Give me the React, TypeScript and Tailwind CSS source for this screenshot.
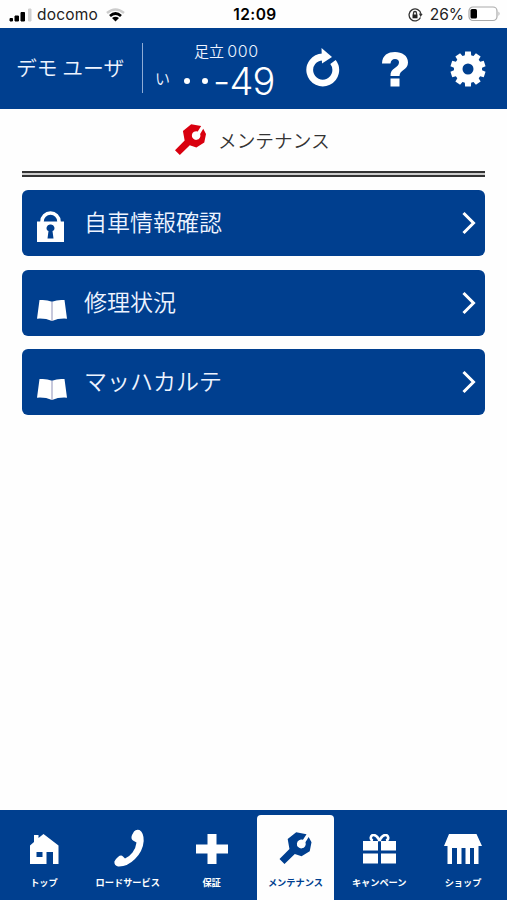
import type { ReactNode } from "react";

function Wrench({ className }: { className?: string }) {
  return (
    <svg viewBox="0 0 90 90" className={className} fill="currentColor">
      <path d="M0 76 28 48 23 20 47 1 76 6 66 22A12.500 12.500 0 1 0 73 29L82 14 90 29 85 54 62 68 43 62 14 90Z" />
    </svg>
  );
}

function Lock() {
  return (
    <svg viewBox="0 0 27 31" className="h-[31px] w-[27px]">
      <path d="M5 12V10.500a8.500 8.500 0 0 1 17 0V12" fill="none" stroke="#fff" strokeWidth="3.600" />
      <path d="M0 10.500h27V31H0z" fill="#fff" />
      <path d="M13.500 13.500a3.500 3.500 0 0 1 2 6.600L16.500 27.500h-6l1-7.400a3.500 3.500 0 0 1 2-6.600z" fill="#003f8f" />
    </svg>
  );
}

function Book() {
  return (
    <svg viewBox="0 0 30 21" className="h-[21px] w-[30px]">
      <path d="M2.500 0Q9-.3 15 1.800Q21-.3 27.500 0L30 18.700Q22 18 15 21Q8 18 0 18.700z" fill="#fff" />
      <path d="M15 1.800V21" stroke="#8f91b8" strokeWidth="1" />
    </svg>
  );
}

const menu = [
  { label: "自車情報確認", icon: <Lock />, pad: "pt-[21px]" },
  { label: "修理状況", icon: <Book />, pad: "pt-[30px]" },
  { label: "マッハカルテ", icon: <Book />, pad: "pt-[30px]" },
];

const tabs: { label: string; icon: ReactNode; active?: boolean }[] = [
  {
    label: "トップ",
    icon: (
      <svg viewBox="0 0 29 31" className="ml-[2px] h-[31px] w-[29px]" fill="currentColor">
        <path fillRule="evenodd" d="M4 1h4.500V4L13.500 0 28.500 11.500V30H23V18H16.500V30H0V11.500L4 8zM6.500 18v5H12.500V18z" />
      </svg>
    ),
  },
  {
    label: "ロードサービス",
    icon: (
      <svg viewBox="0 0 30 38" className="ml-[2px] h-[38px] w-[30px] -translate-y-px" fill="currentColor">
        <path d="M20 2.500Q22 0 25.500 1Q30 4 29.700 12Q29 22 21 30Q13 38 4 37.500Q0 36.500.4 32.500Q1 30.500 4 28Q7 25.500 9 27.500L11 29.500Q15 28 18.500 23.500Q22 18.500 22.500 13.500L19 11.500Q16.500 9.500 18 6z" />
      </svg>
    ),
  },
  {
    label: "保証",
    icon: (
      <svg viewBox="0 0 32 30" className="ml-px h-[30px] w-8" fill="currentColor">
        <path d="M11.500 0h9v10.500H32v9H20.500V30h-9V19.500H0v-9h11.500z" />
      </svg>
    ),
  },
  { label: "メンテナンス", icon: <Wrench className="h-8 w-[35px] -translate-y-px" />, active: true },
  {
    label: "キャンペーン",
    icon: (
      <svg viewBox="0 0 33 30" className="h-[30px] w-[33px]" fill="currentColor">
        <path d="M0 7h15v9.500H0zM18 7h15v9.500H18zM0 19.500h15V29.500H0zM18 19.500h15V29.500H18z" />
        <path d="M16.500 7C14 0 8.500-.5 7.800 3.500Q7.500 6 10 6.500M16.500 7C19 0 24.500-.5 25.200 3.500Q25.500 6 23 6.500" fill="none" stroke="currentColor" strokeWidth="2.600" />
      </svg>
    ),
  },
  {
    label: "ショップ",
    icon: (
      <svg viewBox="0 0 38 30" className="h-[30px] w-[38px]" fill="currentColor">
        <path d="M5 0h27.500L38 12h-3.500V30h-4.500V14h-4v16h-4.500V14h-4v16h-4.500V14H8v16H3.500V12H0z" />
      </svg>
    ),
  },
];

function StatusBar() {
  return (
    <div className="grid h-7 shrink-0 grid-cols-[1fr_auto_1fr] items-center pr-[6px] pl-[9px] font-['Inter',sans-serif] text-[15.500px] leading-7 text-[#222]">
      <div className="flex items-center pt-px">
        <svg viewBox="0 0 23 14" className="h-[14px] w-[23px]">
          <path d="M1 10.500h2.500V13H1zM6 8h3.500v5H6zM12 4.500h3.500V13H12z" fill="#000" stroke="#000" strokeLinejoin="round" />
          <path d="M19.500 1h2.500v12h-2.500z" fill="#d0d0d0" stroke="#d0d0d0" strokeLinejoin="round" />
        </svg>
        <span className="ml-[5px] w-[62px] tracking-[0.2px]">docomo</span>
        <svg viewBox="0 0 19 14" className="ml-[7px] h-[14px] w-[19px]" fill="none">
          <path d="M1 5Q9.500-2 18 5" stroke="#ccc" strokeWidth="2.500" />
          <path d="M4 8Q9.500 3 15 8" stroke="#000" strokeWidth="2.700" />
          <path d="M6 10Q9.500 7.500 13 10L9.500 13.500z" fill="#000" />
        </svg>
      </div>
      <span className="pt-px text-[15.500px] font-semibold tracking-[0.400px] text-black">12:09</span>
      <div className="flex items-center justify-end pt-px">
        <svg viewBox="0 0 15 14" className="mr-[7px] h-[14px] w-[15px]" fill="none" stroke="#333" strokeWidth="1.300">
          <path d="M12.500 9.500A6 6 0 1 1 13 6" />
          <path d="m10.800 5.500 3.800.5-2 3z" fill="#333" stroke="none" />
          <path d="M4.500 6.500h5v3.800h-5z" fill="#222" stroke="none" />
          <path d="M5.500 7V5a1.500 1.500 0 0 1 3 0v2" />
        </svg>
        <span>26%</span>
        <svg viewBox="0 0 33 16" className="ml-[4px] h-4 w-[33px] -translate-y-px">
          <rect x="1" y="1" width="28" height="13.500" rx="4" fill="#fff" stroke="#aaa" strokeWidth="1.200" />
          <rect x="2.500" y="3" width="6.500" height="9.500" rx="1.500" fill="#000" />
          <path d="M30.500 5.500q2 2.200 0 4.500z" fill="#aaa" />
        </svg>
      </div>
    </div>
  );
}

function Header() {
  return (
    <header className="flex h-[81px] shrink-0 bg-[#003f8f] text-[#eef4ff]">
      <div className="w-[142px] pt-6 pl-4 text-[20.800px] leading-[30px] font-[350] whitespace-nowrap">デモ ユーザ</div>
      <div className="mt-[15px] h-[50px] w-px bg-[#8facd5]" />
      <div className="flex w-[131px] flex-col">
        <div className="pt-[14px] pl-[51px] text-[15px] leading-[18px] font-[350] whitespace-nowrap">
          足立 <span className="font-['Inter',sans-serif] text-[16px] font-light tracking-[0.5px]">000</span>
        </div>
        <div className="mt-[3px] flex h-[37px] items-center pl-[12px]">
          <span className="-mt-2 text-[15px] leading-5 font-[350]">い</span>
          <span className="-mt-px ml-[14px] size-[6px] shrink-0 rounded-full bg-white" />
          <span className="-mt-px ml-3 size-[6px] shrink-0 rounded-full bg-white" />
          <span className="-mt-px ml-[5px] font-['Inter',sans-serif] text-[38px] leading-[32px] font-light tracking-[-0.800px] text-white">-49</span>
        </div>
      </div>
      <div className="flex flex-1 pt-[20px] pl-[31px]">
        <svg viewBox="0 0 35 39" className="h-[39px] w-[35px] text-white">
          <path d="M28 14A13 13 0 1 1 17.500 9" fill="none" stroke="currentColor" strokeWidth="6.800" />
          <path d="M16.500 0 27 9 17 15.500z" fill="currentColor" />
        </svg>
        <svg viewBox="0 0 26 35" className="mt-1 ml-[42px] h-[35px] w-[26px] text-white" fill="currentColor">
          <path d="M0 11.500C.3 3 6 0 13 0S26 3.500 26 10.500C26 18.500 17.500 17.500 17.500 24H8.500C8 15.500 17 16 17 10.500Q17 7 13 7T8.500 11.500zM8.500 26.500h9v8h-9z" />
        </svg>
        <svg viewBox="-18 -18 36 36" className="mt-[3px] ml-[42px] h-9 w-9 text-white">
          <circle r="9.800" fill="none" stroke="currentColor" strokeWidth="8.600" />
          {[0, 36, 72, 108, 144, 180, 216, 252, 288, 324].map((a) => (
            <path key={a} d="M-3.300-12-2.900-17.500H2.900L3.300-12z" fill="currentColor" transform={`rotate(${a})`} />
          ))}
        </svg>
      </div>
    </header>
  );
}

export default function App() {
  return (
    <div className="flex h-[900px] w-[507px] flex-col overflow-hidden bg-[#fefefe] font-['Noto_Sans_CJK_JP',sans-serif]">
      <StatusBar />
      <Header />

      <main className="flex-1 px-[22px]">
        <div className="flex h-[62px] pl-[153px]">
          <Wrench className="mt-[15px] h-[31px] w-[31px] text-[#d9000f]" />
          <h1 className="mt-[17px] ml-[12px] text-[18.700px] leading-7 font-[350] text-[#333]">メンテナンス</h1>
        </div>
        <div className="h-[6px] border-y-2 border-[#333] bg-[#ccc]" />

        <ul className="mt-[13px] flex flex-col gap-[13.500px]">
          {menu.map((item) => (
            <li key={item.label} className="flex h-[66px] rounded-[6px] bg-[#003f8f]">
              <div className={`w-[62px] pl-[15px] ${item.pad}`}>{item.icon}</div>
              <span className="flex-1 pt-[15px] text-[23px] leading-8 font-[350] text-[#eef4ff]">{item.label}</span>
              <svg viewBox="0 0 14 24" className="mt-[21px] mr-[9px] h-6 w-[14px]">
                <path d="m1.500 2 10 10-10 10" fill="none" stroke="#fff" strokeWidth="3" />
              </svg>
            </li>
          ))}
        </ul>
      </main>

      <nav className="flex h-[90px] shrink-0 bg-[#003f8f] px-[2px] pt-[5px]">
        {tabs.map((tab) => (
          <div key={tab.label} className="flex flex-1 justify-center">
            <div
              className={`flex w-[77px] flex-col items-center rounded-t-[4px] ${tab.active ? "bg-[#fefefe] text-[#003f8f]" : "text-white"}`}
            >
              <div className="flex h-[68px] items-center justify-center">{tab.icon}</div>
              <span className="-mt-[9px] text-[9.200px] leading-4 font-bold whitespace-nowrap">{tab.label}</span>
            </div>
          </div>
        ))}
      </nav>
    </div>
  );
}
